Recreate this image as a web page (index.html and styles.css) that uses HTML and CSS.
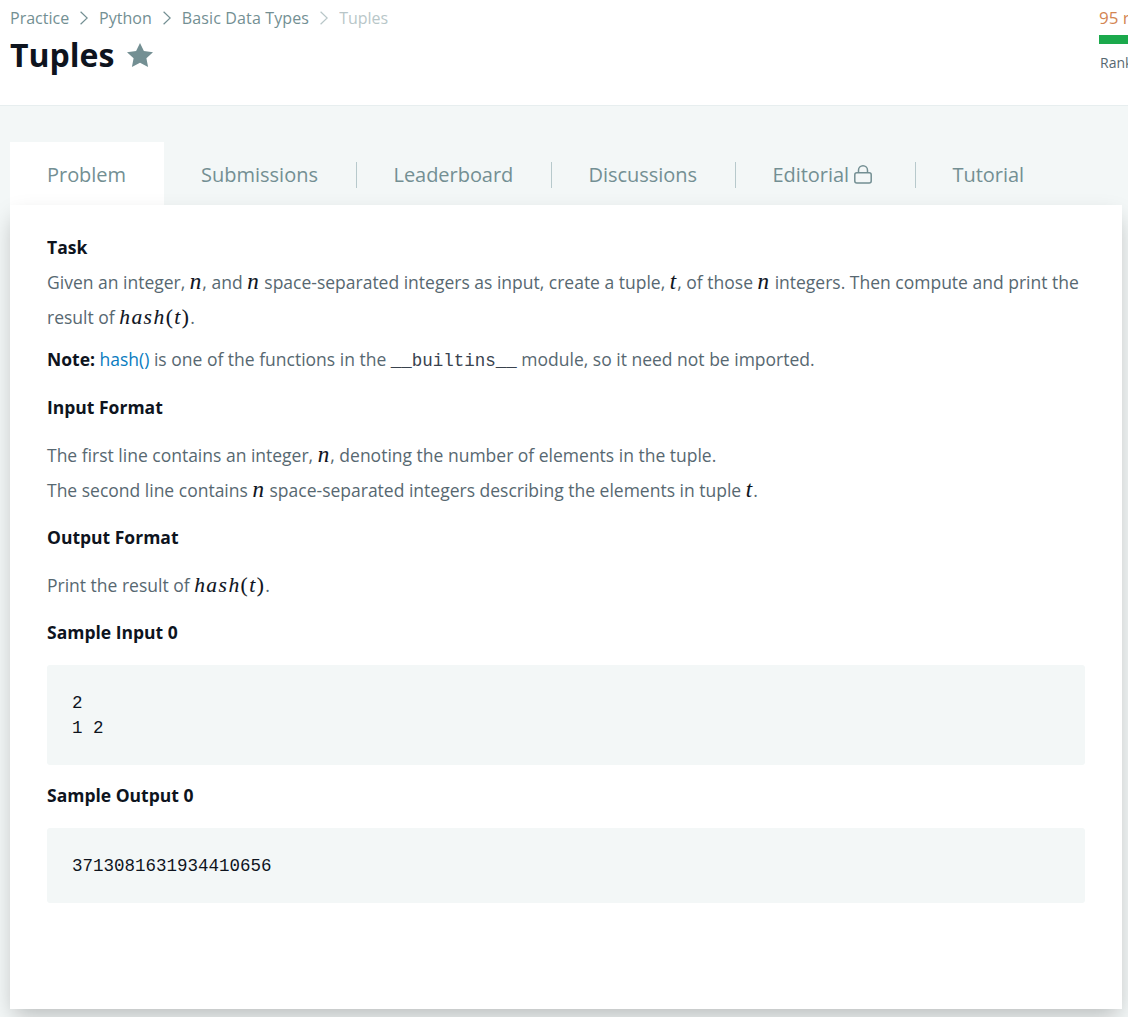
FILE: index.html
```html
<!DOCTYPE html>
<html lang="en">
<head>
<meta charset="utf-8">
<title>Tuples</title>
<link rel="stylesheet" href="styles.css">
</head>
<body>
<header class="page-header">
  <div class="heading">
    <nav class="breadcrumb">
      <a>Practice</a>
      <svg class="chevron" viewBox="0 0 8 14"><path d="M.6.8 7.2 7 .6 13.2"/></svg>
      <a>Python</a>
      <svg class="chevron" viewBox="0 0 8 14"><path d="M.6.8 7.2 7 .6 13.2"/></svg>
      <a class="wide">Basic Data Types</a>
      <svg class="chevron faded" viewBox="0 0 8 14"><path d="M.6.8 7.2 7 .6 13.2"/></svg>
      <span class="faded">Tuples</span>
    </nav>
    <div class="title-row">
      <h1>Tuples</h1>
      <svg class="star" viewBox="0 0 26 24"><path d="M13 0 16.9 8.1 26 9.2 19.4 15.2 21.1 24 13 19.7 4.9 24 6.6 15.2 0 9.2 9.1 8.1Z"/></svg>
    </div>
  </div>
  <div class="progress">
    <div class="points">95 r</div>
    <div class="bar"></div>
    <div class="rank">Rank</div>
  </div>
</header>
<main>
  <nav class="tabs">
    <a class="tab active"><span class="tab-label problem">Problem</span></a>
    <a class="tab"><span class="tab-label submissions">Submissions</span></a>
    <a class="tab"><span class="tab-label leaderboard">Leaderboard</span></a>
    <a class="tab"><span class="tab-label discussions">Discussions</span></a>
    <a class="tab"><span class="tab-label editorial">Editorial<svg class="lock" viewBox="0 0 18 19"><rect x=".8" y="7.8" width="16.4" height="10.2" rx="2"/><path d="M4.5 7.8V5.3a4.5 4.5 0 0 1 9 0v2.5"/></svg></span></a>
    <a class="tab"><span class="tab-label tutorial">Tutorial</span></a>
  </nav>
  <article class="card">
    <h3>Task</h3>
    <p>Given an integer, <i class="math n">n</i>, and <i class="math n">n</i> space-separated integers as input, create a tuple, <i class="math t">t</i>, of those <i class="math n">n</i> integers. Then compute and print the<br>result of <span class="math call"><i>hash</i>(<i>t</i>)</span>.</p>
    <p class="note"><strong>Note:</strong> <a class="link">hash()</a> is one of the functions in the <code>__builtins__</code> module, so it need not be imported.</p>
    <h3 class="section">Input Format</h3>
    <p class="section">The first line contains an integer, <i class="math n">n</i>, denoting the number of elements in the tuple.<br>The second line contains <i class="math n">n</i> space-separated integers describing the elements in tuple <i class="math t">t</i>.</p>
    <h3 class="section-tight">Output Format</h3>
    <p class="section">Print the result of <span class="math call"><i>hash</i>(<i>t</i>)</span>.</p>
    <h3 class="section-tight">Sample Input 0</h3>
    <pre>2
1 2</pre>
    <h3 class="section">Sample Output 0</h3>
    <pre>3713081631934410656</pre>
  </article>
</main>
</body>
</html>
```
FILE: styles.css
```css
* { box-sizing: border-box; }
body {
  margin: 0;
  height: 1017px;
  overflow: hidden;
  background: #f3f7f7;
  color: #576871;
  font-family: "Open Sans", "Noto Sans", sans-serif;
}
h1, h3, p, pre { margin: 0; }
.page-header {
  display: flex;
  justify-content: space-between;
  height: 106px;
  padding: 7px 0 0 10px;
  overflow: hidden;
  background: #fff;
  border-bottom: 1px solid #e7eeef;
}
.breadcrumb {
  display: flex;
  align-items: center;
  gap: 11px;
  height: 22px;
  color: #738f93;
  font-size: 16px;
  line-height: 22px;
}
.wide { letter-spacing: .14px; }
.chevron { width: 8px; height: 14px; fill: none; stroke: #738f93; stroke-width: 1.2; }
.faded { opacity: .5; }
.title-row { display: flex; align-items: center; gap: 13px; height: 52px; }
h1 { color: #0e141e; font-size: 32px; line-height: 52px; font-weight: 700; }
.star { width: 26px; height: 24px; fill: #738f93; }
.progress { width: 29px; white-space: nowrap; }
.points { color: #d38552; font-size: 17px; line-height: 22px; }
.bar { height: 9px; margin: 6px 0 8px; background: #1ba94c; }
.rank { padding-left: 1px; font-size: 14px; line-height: 22px; }
main { padding: 36px 6px 0 10px; }
.tabs { display: flex; height: 63px; }
.tab { display: flex; align-items: center; padding-top: 2px; color: #738f93; font-size: 20px; line-height: 26px; }
.tab-label { display: flex; align-items: center; height: 26px; padding: 0 0 0 36.5px; border-right: 1px solid #b7c9cc; white-space: nowrap; letter-spacing: -.04px; }
.active { background: #fff; }
.problem { width: 154px; padding-left: 37px; border-color: transparent; }
.submissions { width: 193px; padding-left: 37px; letter-spacing: 0; }
.leaderboard { width: 195px; }
.discussions { width: 184px; }
.editorial { width: 180px; }
.tutorial { border-color: transparent; }
.lock { width: 18px; height: 19px; margin-left: 5px; fill: none; stroke: #738f93; stroke-width: 1.5; }
.card {
  position: relative;
  height: 804px;
  padding: 25px 37px 0;
  background: #fff;
  box-shadow: 0 10px 22px -4px rgba(0, 0, 0, .25);
  font-size: 17.5px;
  line-height: 35px;
}
.card p { white-space: nowrap; }
h3 { color: #0e141e; font-size: 17.5px; line-height: 35px; font-weight: 700; }
strong { color: #0e141e; font-weight: 700; }
.note { margin-top: 7px; }
.section { margin-top: 13px; }
.section-tight { margin-top: 12px; }
.link { color: #097bbf; }
code { color: #39424e; font: 17.5px/20px "Liberation Mono", monospace; }
.math { display: inline-block; color: #0e141e; font-family: "Liberation Serif", serif; font-size: 21.5px; line-height: 20px; -webkit-text-stroke: .1px; }
.n { width: 12.6px; font-size: 23px; }
.t { width: 7.5px; font-size: 23px; }
.call { width: 71px; letter-spacing: 1.45px; }
pre {
  margin-top: 15px;
  padding: 26px 25px 24px;
  border-radius: 3px;
  background: #f3f7f7;
  color: #0e141e;
  font: 17.5px/25px "Liberation Mono", monospace;
}
```
